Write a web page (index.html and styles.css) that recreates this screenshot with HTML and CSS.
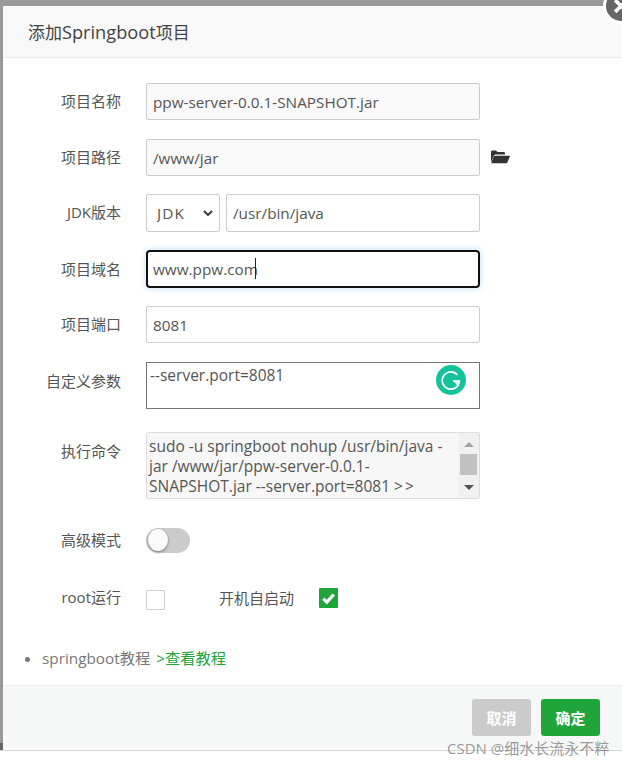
FILE: index.html
```html
<!DOCTYPE html>
<html lang="zh-CN">
<head>
<meta charset="utf-8">
<title>添加Springboot项目</title>
<link rel="stylesheet" href="styles.css">
</head>
<body>
<div class="stage">
  <div class="modal">
    <header class="modal-head">添加<span class="title-latin">Springboot</span>项目</header>
    <div class="modal-body">
      <div class="row">
        <label class="label">项目名称</label>
        <input class="field readonly" value="ppw-server-0.0.1-SNAPSHOT.jar">
      </div>
      <div class="row row-path">
        <label class="label">项目路径</label>
        <input class="field readonly" value="/www/jar">
        <svg class="folder" viewBox="0 0 20 14" aria-hidden="true"><path d="M0 12.4V1.6C0 .8.6.2 1.4.2h3.8l1.7 1.6h6.5c.8 0 1.4.6 1.4 1.4v1.2H5.2c-1 0-1.9.6-2.3 1.5L0 12.4z"/><path d="M4 5.6h15c.7 0 1.1.6.8 1.2l-2.6 6c-.2.5-.7.9-1.3.9H1.2c-.6 0-1-.6-.7-1.1l2.4-6.2c.2-.5.6-.8 1.1-.8z"/></svg>
      </div>
      <div class="row row-jdk">
        <label class="label">JDK版本</label>
        <div class="select-wrap">
          <select class="select"><option>JDK</option></select>
          <svg class="chevron" viewBox="0 0 10 6" aria-hidden="true"><path d="M1 1l4 4 4-4" fill="none" stroke="#333" stroke-width="1.8"/></svg>
        </div>
        <input class="field jdk-path" value="/usr/bin/java">
      </div>
      <div class="row row-focus">
        <label class="label">项目域名</label>
        <div class="focus-wrap">
          <input class="field focused" value="www.ppw.com">
          <span class="caret"></span>
        </div>
      </div>
      <div class="row">
        <label class="label">项目端口</label>
        <input class="field" value="8081">
      </div>
      <div class="row row-args">
        <label class="label">自定义参数</label>
        <div class="args-wrap">
          <textarea class="args">--server.port=8081</textarea>
          <svg class="grammarly" viewBox="0 0 30 30" aria-hidden="true"><circle cx="15" cy="15" r="15" fill="#15c39a"/><path d="M21.3 9.9A8.6 8.6 0 1 0 23.4 16.2H17" fill="none" stroke="#fff" stroke-width="1.7"/><path d="M19.3 16.4l3.4 4.4" fill="none" stroke="#fff" stroke-width="1.9"/></svg>
        </div>
      </div>
      <div class="row row-cmd">
        <label class="label">执行命令</label>
        <div class="cmd">
          <div class="cmd-text">sudo -u springboot nohup /usr/bin/java -jar /www/jar/ppw-server-0.0.1-SNAPSHOT.jar --server.port=8081 <span class="redirect">&gt;&gt;</span></div>
          <div class="scrollbar">
            <span class="arrow arrow-up"></span>
            <span class="thumb"></span>
            <span class="arrow arrow-down"></span>
          </div>
        </div>
      </div>
      <div class="row row-toggle">
        <label class="label">高级模式</label>
        <span class="toggle"><span class="knob"></span></span>
      </div>
      <div class="row row-checks">
        <label class="label">root运行</label>
        <span class="check"></span>
        <label class="label-inline">开机自启动</label>
        <span class="check checked">
          <svg viewBox="0 0 20 20" aria-hidden="true"><path d="M4.6 10.6l3.7 3.7 7.2-8" fill="none" stroke="#fff" stroke-width="3.4"/></svg>
        </span>
      </div>
      <ul class="help">
        <li>springboot教程 <a class="link">&gt;查看教程</a></li>
      </ul>
    </div>
    <footer class="modal-foot">
      <button class="btn btn-cancel">取消</button>
      <button class="btn btn-ok">确定</button>
    </footer>
  </div>
  <span class="close"><svg viewBox="0 0 36 36" aria-hidden="true"><path d="M11 11l14 14M25 11L11 25" stroke="#fff" stroke-width="4.4" fill="none"/></svg></span>
</div>
<div class="watermark">CSDN @细水长流永不粹</div>
</body>
</html>
```
FILE: styles.css
```css
* { box-sizing: border-box; }
html, body { margin: 0; padding: 0; }
body {
  position: relative;
  width: 622px;
  height: 765px;
  overflow: hidden;
  background: #fff;
  font-family: "Open Sans", "Noto Sans CJK SC", sans-serif;
  font-size: 15px;
  color: #555;
}
.stage {
  position: relative;
  height: 751px;
  padding: 6px 0 0 3px;
  background: #999;
  border-bottom: 1px solid #d4d4d4;
  overflow: hidden;
}
.stage::before {
  content: "";
  position: absolute;
  left: 0;
  bottom: 0;
  width: 3px;
  height: 7px;
  background: #666;
}
.modal {
  height: 744px;
  background: #fff;
  display: flex;
  flex-direction: column;
}
.modal-head {
  height: 52px;
  flex: none;
  padding-left: 25px;
  background: #f8f8f8;
  border-bottom: 1px solid #eee;
  font-size: 17px;
  line-height: 52px;
  color: #444;
}
.title-latin { font-size: 18.2px; }
.modal-body { flex: 1; padding-top: 25px; }
.row {
  display: flex;
  align-items: center;
  margin-bottom: 19px;
}
.label {
  width: 118px;
  flex: none;
  text-align: right;
  margin-right: 25px;
  font-size: 15px;
  line-height: 20px;
  padding-bottom: 2px;
  color: #555;
}
.field {
  width: 334px;
  height: 37px;
  padding: 0 6px;
  border: 1px solid #ccc;
  border-radius: 2px;
  background: #fff;
  font: 15.3px "Open Sans", sans-serif;
  color: #555;
  outline: none;
}
.readonly { background: #f9f9f9; }
.row-path { margin-bottom: 18px; }
.folder { width: 19px; height: 14px; margin: 0 0 1px 11px; fill: #333; }
.row-jdk { margin-bottom: 18px; }
.row-jdk .field, .select { height: 38px; }
.select-wrap { position: relative; width: 74px; height: 38px; margin-right: 6px; }
.select {
  width: 74px;
  padding: 0 0 0 10px;
  appearance: none;
  border: 1px solid #ccc;
  border-radius: 2px;
  background: #fff;
  font: 15.3px "Open Sans", sans-serif;
  letter-spacing: 1.2px;
  color: #555;
  outline: none;
}
.chevron { position: absolute; left: 57px; top: 16px; width: 10px; height: 6px; }
.field.jdk-path { width: 254px; }
.row-focus { margin-bottom: 18px; }
.row-focus .label { padding-bottom: 0; }
.focus-wrap { position: relative; }
.field.focused {
  display: block;
  height: 38px;
  border: 2px solid #111;
  border-radius: 4px;
  padding: 0 5px;
  box-shadow: 0 0 6px rgba(102, 175, 233, .45);
}
.caret { position: absolute; left: 109px; top: 8px; width: 1px; height: 21px; background: #222; }
.row-args { align-items: flex-start; margin-bottom: 23px; }
.row-args .label { line-height: 38px; }
.args-wrap { position: relative; height: 47px; }
.args {
  display: block;
  width: 334px;
  height: 47px;
  padding: 0 3px;
  border: 1px solid #767676;
  border-radius: 0;
  font: 15.5px/24px "Open Sans", sans-serif;
  color: #555;
  resize: none;
  outline: none;
}
.grammarly { position: absolute; left: 290px; top: 3px; width: 30px; height: 30px; }
.row-cmd { align-items: flex-start; margin-bottom: 29px; }
.row-cmd .label { line-height: 38px; }
.cmd {
  display: flex;
  width: 334px;
  height: 67px;
  border: 1px solid #ddd;
  border-radius: 2px;
  background: #f7f7f7;
  overflow: hidden;
}
.cmd-text {
  flex: 1;
  padding: 3px 2px 0 2px;
  font-size: 15.5px;
  line-height: 20px;
  color: #555;
}
.redirect { letter-spacing: 2px; }
.scrollbar {
  width: 21px;
  flex: none;
  display: flex;
  flex-direction: column;
  align-items: center;
  background: #f1f1f1;
}
.arrow { width: 0; height: 0; border-left: 5px solid transparent; border-right: 5px solid transparent; }
.arrow-up { margin-top: 9px; border-bottom: 5px solid #a3a3a3; }
.arrow-down { margin-top: 10px; border-top: 5px solid #505050; }
.thumb { display: block; width: 17px; height: 21px; margin-top: 7px; background: #c1c1c1; }
.row-toggle { height: 27px; margin-bottom: 35px; }
.row-toggle .label { padding-bottom: 4px; }
.toggle {
  position: relative;
  width: 44px;
  height: 25px;
  margin-bottom: 2px;
  border-radius: 13px;
  background: #ccc;
}
.knob {
  position: absolute;
  left: 2px;
  top: 1px;
  width: 20px;
  height: 22px;
  border-radius: 50%;
  background: #fafafa;
  box-shadow: 0 1px 3px rgba(0, 0, 0, .45);
}
.row-checks { height: 20px; margin-bottom: 36px; }
.row-checks .label { padding-bottom: 6px; }
.check {
  width: 19px;
  height: 20px;
  border: 1px solid #ccc;
  border-radius: 1px;
  background: #fff;
}
.label-inline { margin: 0 25px 0 54px; font-size: 15px; line-height: 20px; padding-bottom: 4px; color: #555; }
.checked { border: 0; background: #20a53a; display: block; margin-bottom: 4px; }
.checked svg { display: block; width: 19px; height: 20px; }
.help {
  margin: 0;
  padding: 0 0 0 39px;
  font-size: 15.3px;
  color: #777;
}
.link { margin-left: 2px; color: #20a53a; }
.modal-foot {
  height: 65px;
  flex: none;
  display: flex;
  justify-content: flex-end;
  gap: 10px;
  padding: 13px 22px 0 0;
  background: #f6f8f8;
  border-top: 1px solid #eee;
  border-bottom: 2px solid #fff;
}
.btn {
  width: 59px;
  height: 37px;
  border: 0;
  border-radius: 3px;
  font: 700 15px "Noto Sans CJK SC", sans-serif;
  color: #fff;
}
.btn-cancel { background: #cbcbcb; }
.btn-ok { background: #20a53a; }
.close {
  position: absolute;
  left: 603px;
  top: -12px;
  width: 36px;
  height: 36px;
  border-radius: 50%;
  border: 3px solid #fff;
  background: #666;
  display: block;
}
.close svg { display: block; width: 30px; height: 30px; }
.watermark {
  position: absolute;
  left: 447px;
  top: 739px;
  font-size: 15px;
  line-height: 19px;
  color: rgba(120, 120, 120, .75);
  white-space: nowrap;
}
```
